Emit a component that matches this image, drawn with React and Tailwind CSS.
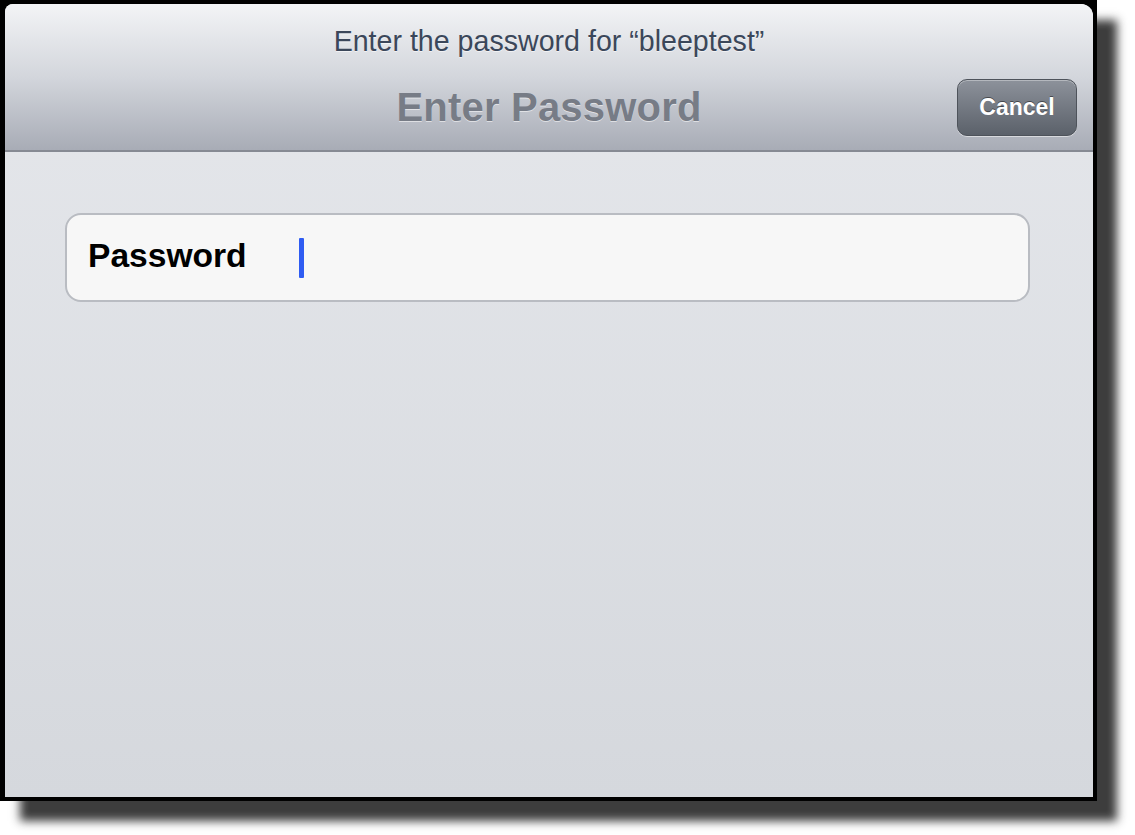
export default function App() {
  return (
    <div className="w-[1135px] h-[835px] bg-white font-['Liberation_Sans',Arial,sans-serif]">
      {/* window frame with drop shadow */}
      <div className="w-[1097px] h-[801px] bg-black pt-[4px] pl-[5px] pr-[4px] pb-[4px] shadow-[20px_20px_9px_rgba(45,45,45,0.92)]">
        <div className="flex flex-col h-full rounded-tl-[8px] rounded-tr-[12px] overflow-hidden bg-gradient-to-b from-[#e6e8ec] to-[#d5d8dd]">
          {/* nav bar */}
          <div className="h-[148px] shrink-0 flex flex-col items-center bg-gradient-to-b from-[#f3f4f6] via-[#d3d6dc] to-[#a8acb6] border-b-[2px] border-[#868a93]">
            <div className="mt-[19px] text-[28.6px] leading-[36px] text-[#3b475a] [text-shadow:0_1px_0_rgba(255,255,255,0.6)]">
              Enter the password for “bleeptest”
            </div>
            <div className="relative w-full mt-[19px] h-[58px] flex items-center justify-center">
              <div className="text-[40px] font-bold tracking-[0.2px] text-[#777c86] [text-shadow:0_1px_0_rgba(255,255,255,0.55)]">
                Enter Password
              </div>
              <button className="absolute right-[16px] top-[1px] w-[120px] h-[57px] rounded-[10px] border border-[#4e535b] bg-gradient-to-b from-[#8d929b] to-[#5b616a] text-white text-[23px] font-bold shadow-[inset_0_1px_0_rgba(255,255,255,0.35),0_1px_0_rgba(255,255,255,0.5)] [text-shadow:0_-1px_0_rgba(0,0,0,0.45)]">
                Cancel
              </button>
            </div>
          </div>

          {/* form */}
          <div className="pt-[61px] pl-[60px] pr-[63px]">
            <div className="h-[89px] rounded-[16px] border-[2px] border-[#b9bcc2] bg-[#f7f7f7] flex items-center pl-[21px]">
              <span className="w-[211px] -mt-[3px] text-[33.6px] font-bold text-black">Password</span>
              <span className="w-[5px] h-[40px] rounded-[1px] bg-[#2f5cf2]"></span>
            </div>
          </div>
        </div>
      </div>
    </div>
  );
}
